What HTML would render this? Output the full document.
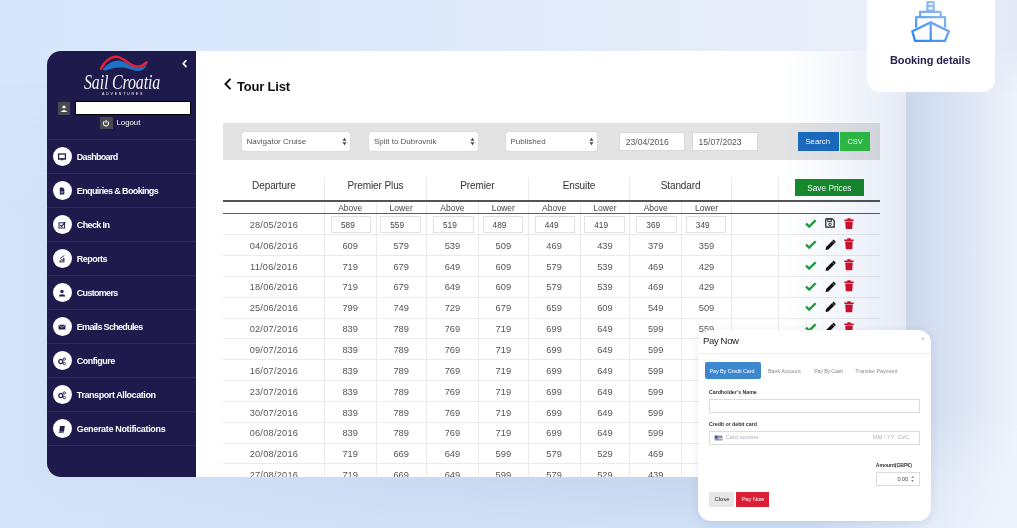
<!DOCTYPE html>
<html><head><meta charset="utf-8">
<style>
*{box-sizing:border-box;margin:0;padding:0}
html,body{width:1017px;height:528px;overflow:hidden}
body{position:relative;font-family:"Liberation Sans", sans-serif;background:#d6e5fa}
.a{position:absolute}
.t{position:absolute;white-space:nowrap;line-height:1}
</style></head><body>

<div class="a" style="left:0;top:0;width:1017px;height:528px;background:linear-gradient(90deg,#d3e4f9 0%,#cadaf2 40%,#c6d6ee 70%,#cad7ec 89%,#eef2fb 100%)"></div>
<div class="a" style="left:0;top:0;width:1017px;height:528px;background:linear-gradient(180deg,rgba(216,231,251,0.75) 0%,rgba(216,231,251,0) 40%);-webkit-mask-image:linear-gradient(90deg,#000 0%,#000 60%,transparent 86%)"></div>
<div class="a" style="left:0;top:0;width:1017px;height:110px;background:linear-gradient(90deg,#d7e7fb 0%,#d9e8fb 25%,#e0eafa 50%,#e6edf9 70%,#eaeff9 85%,#e3eaf6 100%);-webkit-mask-image:linear-gradient(180deg,#000 0px,#000 50px,transparent 92px)"></div>
<div class="a" style="left:0;top:440px;width:1017px;height:88px;background:linear-gradient(180deg,rgba(212,227,249,0) 0%,rgba(212,227,249,0) 40%,rgba(212,227,249,0.7) 100%)"></div>
<div class="a" style="left:0;top:0;width:1017px;height:528px;background:radial-gradient(ellipse 200px 120px at 1017px 528px,rgba(240,244,252,1) 0%,rgba(240,244,252,0) 100%)"></div>
<div class="a" style="left:47px;top:51px;width:859px;height:426px;border-radius:14px;overflow:hidden;background:#fff">
<div class="a" style="left:0;top:0;width:149px;height:426px;background:#1e1a4b"></div>
</div>
<svg class="a" style="left:181px;top:59px" width="7" height="9" viewBox="0 0 7 9"><path d="M5 1.6 L2.2 4.6 L5 7.6" fill="none" stroke="#fff" stroke-width="1.6" stroke-linecap="round" stroke-linejoin="round"/></svg>
<svg class="a" style="left:99px;top:55px" width="52" height="18" viewBox="0 0 52 18"><path d="M3.5 14.5 C8 9 13 5.5 19 5.5 C25 5.5 31 11 38 12.5 C42 13 45.5 11.5 48 9.5 C47 13 43 16 39 16 C34 16 30 13.5 25 12.8 C20 12 15 12.5 10 14.5 C7 15.8 5 16 3.5 14.5Z" fill="#1d70c2"/><path d="M2 13.6 C6 6 12 1.8 17 1.8 C23 1.8 28 8 34 10.5 C39 12.5 44 11 47.5 7.5" fill="none" stroke="#e5203b" stroke-width="2.5" stroke-linecap="round"/></svg>
<div class="t" style="left:83.5px;top:72.2px;font-family:'Liberation Serif',serif;font-style:italic;font-size:21px;color:#f2f2f6;letter-spacing:-0.2px;transform:scaleX(0.76);transform-origin:0 0">Sail Croatia</div>
<div class="t" style="left:102px;top:92.5px;font-size:3.6px;color:#fff;letter-spacing:1.75px">ADVENTURES</div>
<div class="a" style="left:58px;top:102px;width:12px;height:13px;background:#4a4950"></div>
<svg class="a" style="left:60px;top:104px" width="8" height="9" viewBox="0 0 8 9"><circle cx="4" cy="3" r="1.6" fill="#fff"/><path d="M1 8 C1 5.5 7 5.5 7 8Z" fill="#fff"/></svg>
<div class="a" style="left:74.5px;top:100.5px;width:116px;height:14px;background:#fff;border:1.5px solid #000"></div>
<div class="a" style="left:100px;top:117px;width:12.5px;height:12px;background:#4a4950"></div>
<svg class="a" style="left:102px;top:119px" width="8" height="8" viewBox="0 0 8 8"><path d="M2.4 2.4 A2.6 2.6 0 1 0 5.6 2.4" fill="none" stroke="#fff" stroke-width="1.1"/><path d="M4 1 V4" stroke="#fff" stroke-width="1.1"/></svg>
<div class="t" style="left:116.5px;top:118.8px;font-size:7.8px;color:#fff">Logout</div>
<div class="a" style="left:47px;top:139.2px;width:149px;height:1px;background:#2e2a58"></div>
<div class="a" style="left:52.9px;top:146.9px;width:19.2px;height:19.2px;border-radius:50%;background:#fff"></div>
<svg class="a" style="left:57.45px;top:151.50px" width="10" height="10" viewBox="0 0 10 10"><rect x="1.6" y="2" width="6.8" height="4.9" fill="none" stroke="#25214f" stroke-width="1.3"/><rect x="1" y="6.3" width="8" height="1" fill="#25214f"/><rect x="3.9" y="7" width="2.2" height="1.3" fill="#25214f"/></svg>
<div class="t" style="left:76.8px;top:152.5px;font-size:9px;font-weight:700;color:#fff;letter-spacing:-0.70px">Dashboard</div>
<div class="a" style="left:47px;top:173.2px;width:149px;height:1px;background:#2e2a58"></div>
<div class="a" style="left:52.9px;top:180.9px;width:19.2px;height:19.2px;border-radius:50%;background:#fff"></div>
<svg class="a" style="left:57.45px;top:185.50px" width="10" height="10" viewBox="0 0 10 10"><path d="M2.8 1.5 H5.8 L7.3 3 V8.6 H2.8Z" fill="#25214f"/><rect x="3.7" y="5.6" width="2.6" height="0.5" fill="#fff"/><rect x="3.7" y="6.6" width="2.6" height="0.5" fill="#fff"/></svg>
<div class="t" style="left:76.8px;top:186.5px;font-size:9px;font-weight:700;color:#fff;letter-spacing:-0.61px">Enquiries &amp; Bookings</div>
<div class="a" style="left:47px;top:207.2px;width:149px;height:1px;background:#2e2a58"></div>
<div class="a" style="left:52.9px;top:214.9px;width:19.2px;height:19.2px;border-radius:50%;background:#fff"></div>
<svg class="a" style="left:57.45px;top:219.50px" width="10" height="10" viewBox="0 0 10 10"><rect x="2" y="2.8" width="5.6" height="5.2" fill="none" stroke="#25214f" stroke-width="1"/><path d="M3.3 5 L4.7 6.4 L8.3 2.2" fill="none" stroke="#25214f" stroke-width="1.2"/></svg>
<div class="t" style="left:76.8px;top:220.5px;font-size:9px;font-weight:700;color:#fff;letter-spacing:-0.63px">Check In</div>
<div class="a" style="left:47px;top:241.2px;width:149px;height:1px;background:#2e2a58"></div>
<div class="a" style="left:52.9px;top:248.9px;width:19.2px;height:19.2px;border-radius:50%;background:#fff"></div>
<svg class="a" style="left:57.45px;top:253.50px" width="10" height="10" viewBox="0 0 10 10"><path d="M2.6 8.5 V6.2 H3.8 V8.5Z M4.4 8.5 V5 H5.6 V8.5Z M6.2 8.5 V4 H7.4 V8.5Z" fill="#25214f"/><path d="M3 4.6 L7.3 1.5" stroke="#25214f" stroke-width="0.9"/></svg>
<div class="t" style="left:76.8px;top:254.5px;font-size:9px;font-weight:700;color:#fff;letter-spacing:-0.54px">Reports</div>
<div class="a" style="left:47px;top:275.2px;width:149px;height:1px;background:#2e2a58"></div>
<div class="a" style="left:52.9px;top:282.9px;width:19.2px;height:19.2px;border-radius:50%;background:#fff"></div>
<svg class="a" style="left:57.45px;top:287.50px" width="10" height="10" viewBox="0 0 10 10"><circle cx="5" cy="3.4" r="1.7" fill="#25214f"/><path d="M1.8 8.6 C1.8 5.4 8.2 5.4 8.2 8.6Z" fill="#25214f"/></svg>
<div class="t" style="left:76.8px;top:288.5px;font-size:9px;font-weight:700;color:#fff;letter-spacing:-0.70px">Customers</div>
<div class="a" style="left:47px;top:309.2px;width:149px;height:1px;background:#2e2a58"></div>
<div class="a" style="left:52.9px;top:316.9px;width:19.2px;height:19.2px;border-radius:50%;background:#fff"></div>
<svg class="a" style="left:57.45px;top:321.50px" width="10" height="10" viewBox="0 0 10 10"><rect x="1.6" y="2.8" width="6.8" height="4.6" rx="0.4" fill="#25214f"/><path d="M1.8 3.1 L5 5.4 L8.2 3.1" fill="none" stroke="#fff" stroke-width="0.6"/></svg>
<div class="t" style="left:76.8px;top:322.5px;font-size:9px;font-weight:700;color:#fff;letter-spacing:-0.68px">Emails Schedules</div>
<div class="a" style="left:47px;top:343.2px;width:149px;height:1px;background:#2e2a58"></div>
<div class="a" style="left:52.9px;top:350.9px;width:19.2px;height:19.2px;border-radius:50%;background:#fff"></div>
<svg class="a" style="left:57.45px;top:355.50px" width="10" height="10" viewBox="0 0 10 10"><circle cx="3.8" cy="5.6" r="2.1" fill="none" stroke="#25214f" stroke-width="1.3"/><circle cx="7.3" cy="3" r="1.2" fill="none" stroke="#25214f" stroke-width="0.9"/><circle cx="7.3" cy="7.6" r="1.2" fill="none" stroke="#25214f" stroke-width="0.9"/></svg>
<div class="t" style="left:76.8px;top:356.5px;font-size:9px;font-weight:700;color:#fff;letter-spacing:-0.49px">Configure</div>
<div class="a" style="left:47px;top:377.2px;width:149px;height:1px;background:#2e2a58"></div>
<div class="a" style="left:52.9px;top:384.9px;width:19.2px;height:19.2px;border-radius:50%;background:#fff"></div>
<svg class="a" style="left:57.45px;top:389.50px" width="10" height="10" viewBox="0 0 10 10"><circle cx="3.8" cy="5.6" r="2.1" fill="none" stroke="#25214f" stroke-width="1.3"/><circle cx="7.3" cy="3" r="1.2" fill="none" stroke="#25214f" stroke-width="0.9"/><circle cx="7.3" cy="7.6" r="1.2" fill="none" stroke="#25214f" stroke-width="0.9"/></svg>
<div class="t" style="left:76.8px;top:390.5px;font-size:9px;font-weight:700;color:#fff;letter-spacing:-0.42px">Transport Allocation</div>
<div class="a" style="left:47px;top:411.2px;width:149px;height:1px;background:#2e2a58"></div>
<div class="a" style="left:52.9px;top:418.9px;width:19.2px;height:19.2px;border-radius:50%;background:#fff"></div>
<svg class="a" style="left:57.45px;top:423.50px" width="10" height="10" viewBox="0 0 10 10"><path d="M3 2 H7.8 L7 7.8 H2.2Z" fill="#25214f"/><path d="M2.2 7.8 L2 8.6 H6.8" fill="none" stroke="#25214f" stroke-width="0.7"/></svg>
<div class="t" style="left:76.8px;top:424.5px;font-size:9px;font-weight:700;color:#fff;letter-spacing:-0.34px">Generate Notifications</div>
<div class="a" style="left:47px;top:445px;width:149px;height:1px;background:#2e2a58"></div>
<div class="a" style="left:0;top:0;width:1017px;height:528px;clip-path:inset(51px 111px 51px 196px)">
<svg class="a" style="left:223px;top:78px" width="9" height="12" viewBox="0 0 9 12"><path d="M6.8 1.6 L2.4 6 L6.8 10.4" fill="none" stroke="#111" stroke-width="1.9" stroke-linecap="square"/></svg>
<div class="t" style="left:237px;top:79.5px;font-size:13px;font-weight:700;color:#111;letter-spacing:-0.2px">Tour List</div>
<div class="a" style="left:223px;top:123px;width:657px;height:37px;background:#e3e3e3"></div>
<div class="a" style="left:242.0px;top:132px;width:108.0px;height:19px;background:#fff;border-radius:3px;box-shadow:0 0 0 0.5px #d8d8d8"></div>
<div class="t" style="left:246.5px;top:137.6px;font-size:8px;color:#555">Navigator Cruise</div>
<svg class="a" style="left:342.2px;top:137px" width="5" height="9" viewBox="0 0 5 9"><path d="M0.5 3.8 L2.5 0.8 L4.5 3.8Z M0.5 5.2 L2.5 8.2 L4.5 5.2Z" fill="#444"/></svg>
<div class="a" style="left:369.4px;top:132px;width:108.6px;height:19px;background:#fff;border-radius:3px;box-shadow:0 0 0 0.5px #d8d8d8"></div>
<div class="t" style="left:373.9px;top:137.6px;font-size:8px;color:#555">Split to Dubrovnik</div>
<svg class="a" style="left:470.2px;top:137px" width="5" height="9" viewBox="0 0 5 9"><path d="M0.5 3.8 L2.5 0.8 L4.5 3.8Z M0.5 5.2 L2.5 8.2 L4.5 5.2Z" fill="#444"/></svg>
<div class="a" style="left:506.0px;top:132px;width:90.8px;height:19px;background:#fff;border-radius:3px;box-shadow:0 0 0 0.5px #d8d8d8"></div>
<div class="t" style="left:510.5px;top:137.6px;font-size:8px;color:#555">Published</div>
<svg class="a" style="left:589.0px;top:137px" width="5" height="9" viewBox="0 0 5 9"><path d="M0.5 3.8 L2.5 0.8 L4.5 3.8Z M0.5 5.2 L2.5 8.2 L4.5 5.2Z" fill="#444"/></svg>
<div class="a" style="left:618.8px;top:131.5px;width:66.2px;height:19.5px;background:#fff;border:1px solid #d9d9d9"></div>
<div class="t" style="left:625.8px;top:137.5px;font-size:8.6px;color:#555">23/04/2016</div>
<div class="a" style="left:691.5px;top:131.5px;width:66.9px;height:19.5px;background:#fff;border:1px solid #d9d9d9"></div>
<div class="t" style="left:698.5px;top:137.5px;font-size:8.6px;color:#555">15/07/2023</div>
<div class="a" style="left:797.7px;top:132px;width:41px;height:19px;background:#1b6bbd"></div>
<div class="t" style="left:805.4px;top:138.2px;font-size:7.8px;color:#fff">Search</div>
<div class="a" style="left:840px;top:132px;width:30.4px;height:19px;background:#2fbd44"></div>
<div class="t" style="left:847.5px;top:138.2px;font-size:7.4px;color:#fff">CSV</div>
<div class="a" style="left:324px;top:178px;width:1px;height:299px;background:#ebebeb"></div>
<div class="a" style="left:376px;top:202px;width:1px;height:275px;background:#ebebeb"></div>
<div class="a" style="left:426px;top:178px;width:1px;height:299px;background:#ebebeb"></div>
<div class="a" style="left:478px;top:202px;width:1px;height:275px;background:#ebebeb"></div>
<div class="a" style="left:528px;top:178px;width:1px;height:299px;background:#ebebeb"></div>
<div class="a" style="left:580px;top:202px;width:1px;height:275px;background:#ebebeb"></div>
<div class="a" style="left:629px;top:178px;width:1px;height:299px;background:#ebebeb"></div>
<div class="a" style="left:681px;top:202px;width:1px;height:275px;background:#ebebeb"></div>
<div class="a" style="left:731px;top:178px;width:1px;height:299px;background:#ebebeb"></div>
<div class="a" style="left:778px;top:178px;width:1px;height:299px;background:#ebebeb"></div>
<div class="t" style="left:273.9px;top:181.2px;width:0;font-size:10px;color:#333;letter-spacing:-0.1px"><span style="position:absolute;transform:translateX(-50%)">Departure</span></div>
<div class="t" style="left:375.5px;top:181.2px;width:0;font-size:10px;color:#333;letter-spacing:-0.1px"><span style="position:absolute;transform:translateX(-50%)">Premier Plus</span></div>
<div class="t" style="left:477.4px;top:181.2px;width:0;font-size:10px;color:#333;letter-spacing:-0.1px"><span style="position:absolute;transform:translateX(-50%)">Premier</span></div>
<div class="t" style="left:579.0px;top:181.2px;width:0;font-size:10px;color:#333;letter-spacing:-0.1px"><span style="position:absolute;transform:translateX(-50%)">Ensuite</span></div>
<div class="t" style="left:680.6px;top:181.2px;width:0;font-size:10px;color:#333;letter-spacing:-0.1px"><span style="position:absolute;transform:translateX(-50%)">Standard</span></div>
<div class="a" style="left:795.2px;top:178.8px;width:68.5px;height:17.2px;background:#168a2c"></div>
<div class="t" style="left:807.2px;top:183.5px;font-size:8.3px;color:#fff">Save Prices</div>
<div class="a" style="left:223.2px;top:200px;width:656.4px;height:2px;background:#555"></div>
<div class="a" style="left:223.2px;top:212.9px;width:656.4px;height:1.6px;background:#5c5c5c"></div>
<div class="t" style="left:350.2px;top:204.3px;width:0;font-size:8.5px;color:#444"><span style="position:absolute;transform:translateX(-50%)">Above</span></div>
<div class="t" style="left:401.2px;top:204.3px;width:0;font-size:8.5px;color:#444"><span style="position:absolute;transform:translateX(-50%)">Lower</span></div>
<div class="t" style="left:452.4px;top:204.3px;width:0;font-size:8.5px;color:#444"><span style="position:absolute;transform:translateX(-50%)">Above</span></div>
<div class="t" style="left:503.3px;top:204.3px;width:0;font-size:8.5px;color:#444"><span style="position:absolute;transform:translateX(-50%)">Lower</span></div>
<div class="t" style="left:554.1px;top:204.3px;width:0;font-size:8.5px;color:#444"><span style="position:absolute;transform:translateX(-50%)">Above</span></div>
<div class="t" style="left:604.9px;top:204.3px;width:0;font-size:8.5px;color:#444"><span style="position:absolute;transform:translateX(-50%)">Lower</span></div>
<div class="t" style="left:655.7px;top:204.3px;width:0;font-size:8.5px;color:#444"><span style="position:absolute;transform:translateX(-50%)">Above</span></div>
<div class="t" style="left:706.5px;top:204.3px;width:0;font-size:8.5px;color:#444"><span style="position:absolute;transform:translateX(-50%)">Lower</span></div>
<div class="a" style="left:223.2px;top:234.0px;width:656.4px;height:1px;background:#ebebeb"></div>
<div class="t" style="left:273.9px;top:220.8px;width:0;font-size:9.2px;color:#555;letter-spacing:0.25px"><span style="position:absolute;transform:translateX(-50%)">28/05/2016</span></div>
<svg class="a" style="left:805px;top:219.0px" width="11.5" height="9" viewBox="0 0 11.5 9"><path d="M1 4.6 L4.2 7.6 L10.6 1.2" fill="none" stroke="#1e9a3a" stroke-width="2.3"/></svg>
<svg class="a" style="left:843.8px;top:217.6px" width="10" height="11.5" viewBox="0 0 10 11.5"><path d="M0.3 1.6 H9.7 V3 H0.3Z M3.3 0.3 H6.7 V1.6 H3.3Z M1.2 3.6 H8.8 L8.2 11.2 H1.8Z" fill="#d3112c"/></svg>
<svg class="a" style="left:825px;top:218.3px" width="10" height="10" viewBox="0 0 10 10"><path d="M1 0.8 H7.4 L9.2 2.6 V9.2 H0.8 V0.8Z" fill="none" stroke="#222" stroke-width="1.2" stroke-linejoin="round"/><rect x="2.8" y="1" width="3.6" height="2.4" fill="none" stroke="#222" stroke-width="0.9"/><circle cx="5" cy="6.3" r="1.3" fill="none" stroke="#222" stroke-width="0.9"/></svg>
<div class="a" style="left:331.0px;top:216.3px;width:40.3px;height:16.4px;border:1px solid #e2e2e2;background:#fff"></div>
<div class="t" style="left:341.0px;top:221.4px;font-size:8.3px;color:#444">589</div>
<div class="a" style="left:380.2px;top:216.3px;width:41.2px;height:16.4px;border:1px solid #e2e2e2;background:#fff"></div>
<div class="t" style="left:390.2px;top:221.4px;font-size:8.3px;color:#444">559</div>
<div class="a" style="left:433.0px;top:216.3px;width:40.7px;height:16.4px;border:1px solid #e2e2e2;background:#fff"></div>
<div class="t" style="left:443.0px;top:221.4px;font-size:8.3px;color:#444">519</div>
<div class="a" style="left:482.6px;top:216.3px;width:40.5px;height:16.4px;border:1px solid #e2e2e2;background:#fff"></div>
<div class="t" style="left:492.6px;top:221.4px;font-size:8.3px;color:#444">489</div>
<div class="a" style="left:534.7px;top:216.3px;width:40.6px;height:16.4px;border:1px solid #e2e2e2;background:#fff"></div>
<div class="t" style="left:544.7px;top:221.4px;font-size:8.3px;color:#444">449</div>
<div class="a" style="left:584.2px;top:216.3px;width:40.5px;height:16.4px;border:1px solid #e2e2e2;background:#fff"></div>
<div class="t" style="left:594.2px;top:221.4px;font-size:8.3px;color:#444">419</div>
<div class="a" style="left:636.3px;top:216.3px;width:40.6px;height:16.4px;border:1px solid #e2e2e2;background:#fff"></div>
<div class="t" style="left:646.3px;top:221.4px;font-size:8.3px;color:#444">369</div>
<div class="a" style="left:685.8px;top:216.3px;width:40.6px;height:16.4px;border:1px solid #e2e2e2;background:#fff"></div>
<div class="t" style="left:695.8px;top:221.4px;font-size:8.3px;color:#444">349</div>
<div class="a" style="left:223.2px;top:254.9px;width:656.4px;height:1px;background:#ebebeb"></div>
<div class="t" style="left:273.9px;top:241.7px;width:0;font-size:9.2px;color:#555;letter-spacing:0.25px"><span style="position:absolute;transform:translateX(-50%)">04/06/2016</span></div>
<svg class="a" style="left:805px;top:239.8px" width="11.5" height="9" viewBox="0 0 11.5 9"><path d="M1 4.6 L4.2 7.6 L10.6 1.2" fill="none" stroke="#1e9a3a" stroke-width="2.3"/></svg>
<svg class="a" style="left:843.8px;top:238.4px" width="10" height="11.5" viewBox="0 0 10 11.5"><path d="M0.3 1.6 H9.7 V3 H0.3Z M3.3 0.3 H6.7 V1.6 H3.3Z M1.2 3.6 H8.8 L8.2 11.2 H1.8Z" fill="#d3112c"/></svg>
<svg class="a" style="left:824.5px;top:238.8px" width="11.5" height="11.5" viewBox="0 0 11.5 11.5"><path d="M8.6 0.6 L10.9 2.9 L3.4 10.4 L0.6 10.9 L1.1 8.1Z" fill="#111"/><path d="M7.2 2 L9.5 4.3" stroke="#fff" stroke-width="0.5"/></svg>
<div class="t" style="left:350.2px;top:241.7px;width:0;font-size:9.3px;color:#555"><span style="position:absolute;transform:translateX(-50%)">609</span></div>
<div class="t" style="left:401.2px;top:241.7px;width:0;font-size:9.3px;color:#555"><span style="position:absolute;transform:translateX(-50%)">579</span></div>
<div class="t" style="left:452.4px;top:241.7px;width:0;font-size:9.3px;color:#555"><span style="position:absolute;transform:translateX(-50%)">539</span></div>
<div class="t" style="left:503.3px;top:241.7px;width:0;font-size:9.3px;color:#555"><span style="position:absolute;transform:translateX(-50%)">509</span></div>
<div class="t" style="left:554.1px;top:241.7px;width:0;font-size:9.3px;color:#555"><span style="position:absolute;transform:translateX(-50%)">469</span></div>
<div class="t" style="left:604.9px;top:241.7px;width:0;font-size:9.3px;color:#555"><span style="position:absolute;transform:translateX(-50%)">439</span></div>
<div class="t" style="left:655.7px;top:241.7px;width:0;font-size:9.3px;color:#555"><span style="position:absolute;transform:translateX(-50%)">379</span></div>
<div class="t" style="left:706.5px;top:241.7px;width:0;font-size:9.3px;color:#555"><span style="position:absolute;transform:translateX(-50%)">359</span></div>
<div class="a" style="left:223.2px;top:275.8px;width:656.4px;height:1px;background:#ebebeb"></div>
<div class="t" style="left:273.9px;top:262.5px;width:0;font-size:9.2px;color:#555;letter-spacing:0.25px"><span style="position:absolute;transform:translateX(-50%)">11/06/2016</span></div>
<svg class="a" style="left:805px;top:260.7px" width="11.5" height="9" viewBox="0 0 11.5 9"><path d="M1 4.6 L4.2 7.6 L10.6 1.2" fill="none" stroke="#1e9a3a" stroke-width="2.3"/></svg>
<svg class="a" style="left:843.8px;top:259.3px" width="10" height="11.5" viewBox="0 0 10 11.5"><path d="M0.3 1.6 H9.7 V3 H0.3Z M3.3 0.3 H6.7 V1.6 H3.3Z M1.2 3.6 H8.8 L8.2 11.2 H1.8Z" fill="#d3112c"/></svg>
<svg class="a" style="left:824.5px;top:259.7px" width="11.5" height="11.5" viewBox="0 0 11.5 11.5"><path d="M8.6 0.6 L10.9 2.9 L3.4 10.4 L0.6 10.9 L1.1 8.1Z" fill="#111"/><path d="M7.2 2 L9.5 4.3" stroke="#fff" stroke-width="0.5"/></svg>
<div class="t" style="left:350.2px;top:262.5px;width:0;font-size:9.3px;color:#555"><span style="position:absolute;transform:translateX(-50%)">719</span></div>
<div class="t" style="left:401.2px;top:262.5px;width:0;font-size:9.3px;color:#555"><span style="position:absolute;transform:translateX(-50%)">679</span></div>
<div class="t" style="left:452.4px;top:262.5px;width:0;font-size:9.3px;color:#555"><span style="position:absolute;transform:translateX(-50%)">649</span></div>
<div class="t" style="left:503.3px;top:262.5px;width:0;font-size:9.3px;color:#555"><span style="position:absolute;transform:translateX(-50%)">609</span></div>
<div class="t" style="left:554.1px;top:262.5px;width:0;font-size:9.3px;color:#555"><span style="position:absolute;transform:translateX(-50%)">579</span></div>
<div class="t" style="left:604.9px;top:262.5px;width:0;font-size:9.3px;color:#555"><span style="position:absolute;transform:translateX(-50%)">539</span></div>
<div class="t" style="left:655.7px;top:262.5px;width:0;font-size:9.3px;color:#555"><span style="position:absolute;transform:translateX(-50%)">469</span></div>
<div class="t" style="left:706.5px;top:262.5px;width:0;font-size:9.3px;color:#555"><span style="position:absolute;transform:translateX(-50%)">429</span></div>
<div class="a" style="left:223.2px;top:296.6px;width:656.4px;height:1px;background:#ebebeb"></div>
<div class="t" style="left:273.9px;top:283.4px;width:0;font-size:9.2px;color:#555;letter-spacing:0.25px"><span style="position:absolute;transform:translateX(-50%)">18/06/2016</span></div>
<svg class="a" style="left:805px;top:281.6px" width="11.5" height="9" viewBox="0 0 11.5 9"><path d="M1 4.6 L4.2 7.6 L10.6 1.2" fill="none" stroke="#1e9a3a" stroke-width="2.3"/></svg>
<svg class="a" style="left:843.8px;top:280.1px" width="10" height="11.5" viewBox="0 0 10 11.5"><path d="M0.3 1.6 H9.7 V3 H0.3Z M3.3 0.3 H6.7 V1.6 H3.3Z M1.2 3.6 H8.8 L8.2 11.2 H1.8Z" fill="#d3112c"/></svg>
<svg class="a" style="left:824.5px;top:280.6px" width="11.5" height="11.5" viewBox="0 0 11.5 11.5"><path d="M8.6 0.6 L10.9 2.9 L3.4 10.4 L0.6 10.9 L1.1 8.1Z" fill="#111"/><path d="M7.2 2 L9.5 4.3" stroke="#fff" stroke-width="0.5"/></svg>
<div class="t" style="left:350.2px;top:283.4px;width:0;font-size:9.3px;color:#555"><span style="position:absolute;transform:translateX(-50%)">719</span></div>
<div class="t" style="left:401.2px;top:283.4px;width:0;font-size:9.3px;color:#555"><span style="position:absolute;transform:translateX(-50%)">679</span></div>
<div class="t" style="left:452.4px;top:283.4px;width:0;font-size:9.3px;color:#555"><span style="position:absolute;transform:translateX(-50%)">649</span></div>
<div class="t" style="left:503.3px;top:283.4px;width:0;font-size:9.3px;color:#555"><span style="position:absolute;transform:translateX(-50%)">609</span></div>
<div class="t" style="left:554.1px;top:283.4px;width:0;font-size:9.3px;color:#555"><span style="position:absolute;transform:translateX(-50%)">579</span></div>
<div class="t" style="left:604.9px;top:283.4px;width:0;font-size:9.3px;color:#555"><span style="position:absolute;transform:translateX(-50%)">539</span></div>
<div class="t" style="left:655.7px;top:283.4px;width:0;font-size:9.3px;color:#555"><span style="position:absolute;transform:translateX(-50%)">469</span></div>
<div class="t" style="left:706.5px;top:283.4px;width:0;font-size:9.3px;color:#555"><span style="position:absolute;transform:translateX(-50%)">429</span></div>
<div class="a" style="left:223.2px;top:317.5px;width:656.4px;height:1px;background:#ebebeb"></div>
<div class="t" style="left:273.9px;top:304.2px;width:0;font-size:9.2px;color:#555;letter-spacing:0.25px"><span style="position:absolute;transform:translateX(-50%)">25/06/2016</span></div>
<svg class="a" style="left:805px;top:302.4px" width="11.5" height="9" viewBox="0 0 11.5 9"><path d="M1 4.6 L4.2 7.6 L10.6 1.2" fill="none" stroke="#1e9a3a" stroke-width="2.3"/></svg>
<svg class="a" style="left:843.8px;top:301.0px" width="10" height="11.5" viewBox="0 0 10 11.5"><path d="M0.3 1.6 H9.7 V3 H0.3Z M3.3 0.3 H6.7 V1.6 H3.3Z M1.2 3.6 H8.8 L8.2 11.2 H1.8Z" fill="#d3112c"/></svg>
<svg class="a" style="left:824.5px;top:301.4px" width="11.5" height="11.5" viewBox="0 0 11.5 11.5"><path d="M8.6 0.6 L10.9 2.9 L3.4 10.4 L0.6 10.9 L1.1 8.1Z" fill="#111"/><path d="M7.2 2 L9.5 4.3" stroke="#fff" stroke-width="0.5"/></svg>
<div class="t" style="left:350.2px;top:304.2px;width:0;font-size:9.3px;color:#555"><span style="position:absolute;transform:translateX(-50%)">799</span></div>
<div class="t" style="left:401.2px;top:304.2px;width:0;font-size:9.3px;color:#555"><span style="position:absolute;transform:translateX(-50%)">749</span></div>
<div class="t" style="left:452.4px;top:304.2px;width:0;font-size:9.3px;color:#555"><span style="position:absolute;transform:translateX(-50%)">729</span></div>
<div class="t" style="left:503.3px;top:304.2px;width:0;font-size:9.3px;color:#555"><span style="position:absolute;transform:translateX(-50%)">679</span></div>
<div class="t" style="left:554.1px;top:304.2px;width:0;font-size:9.3px;color:#555"><span style="position:absolute;transform:translateX(-50%)">659</span></div>
<div class="t" style="left:604.9px;top:304.2px;width:0;font-size:9.3px;color:#555"><span style="position:absolute;transform:translateX(-50%)">609</span></div>
<div class="t" style="left:655.7px;top:304.2px;width:0;font-size:9.3px;color:#555"><span style="position:absolute;transform:translateX(-50%)">549</span></div>
<div class="t" style="left:706.5px;top:304.2px;width:0;font-size:9.3px;color:#555"><span style="position:absolute;transform:translateX(-50%)">509</span></div>
<div class="a" style="left:223.2px;top:338.3px;width:656.4px;height:1px;background:#ebebeb"></div>
<div class="t" style="left:273.9px;top:325.1px;width:0;font-size:9.2px;color:#555;letter-spacing:0.25px"><span style="position:absolute;transform:translateX(-50%)">02/07/2016</span></div>
<svg class="a" style="left:805px;top:323.2px" width="11.5" height="9" viewBox="0 0 11.5 9"><path d="M1 4.6 L4.2 7.6 L10.6 1.2" fill="none" stroke="#1e9a3a" stroke-width="2.3"/></svg>
<svg class="a" style="left:843.8px;top:321.8px" width="10" height="11.5" viewBox="0 0 10 11.5"><path d="M0.3 1.6 H9.7 V3 H0.3Z M3.3 0.3 H6.7 V1.6 H3.3Z M1.2 3.6 H8.8 L8.2 11.2 H1.8Z" fill="#d3112c"/></svg>
<svg class="a" style="left:824.5px;top:322.2px" width="11.5" height="11.5" viewBox="0 0 11.5 11.5"><path d="M8.6 0.6 L10.9 2.9 L3.4 10.4 L0.6 10.9 L1.1 8.1Z" fill="#111"/><path d="M7.2 2 L9.5 4.3" stroke="#fff" stroke-width="0.5"/></svg>
<div class="t" style="left:350.2px;top:325.1px;width:0;font-size:9.3px;color:#555"><span style="position:absolute;transform:translateX(-50%)">839</span></div>
<div class="t" style="left:401.2px;top:325.1px;width:0;font-size:9.3px;color:#555"><span style="position:absolute;transform:translateX(-50%)">789</span></div>
<div class="t" style="left:452.4px;top:325.1px;width:0;font-size:9.3px;color:#555"><span style="position:absolute;transform:translateX(-50%)">769</span></div>
<div class="t" style="left:503.3px;top:325.1px;width:0;font-size:9.3px;color:#555"><span style="position:absolute;transform:translateX(-50%)">719</span></div>
<div class="t" style="left:554.1px;top:325.1px;width:0;font-size:9.3px;color:#555"><span style="position:absolute;transform:translateX(-50%)">699</span></div>
<div class="t" style="left:604.9px;top:325.1px;width:0;font-size:9.3px;color:#555"><span style="position:absolute;transform:translateX(-50%)">649</span></div>
<div class="t" style="left:655.7px;top:325.1px;width:0;font-size:9.3px;color:#555"><span style="position:absolute;transform:translateX(-50%)">599</span></div>
<div class="t" style="left:706.5px;top:325.1px;width:0;font-size:9.3px;color:#555"><span style="position:absolute;transform:translateX(-50%)">559</span></div>
<div class="a" style="left:223.2px;top:359.2px;width:656.4px;height:1px;background:#ebebeb"></div>
<div class="t" style="left:273.9px;top:345.9px;width:0;font-size:9.2px;color:#555;letter-spacing:0.25px"><span style="position:absolute;transform:translateX(-50%)">09/07/2016</span></div>
<svg class="a" style="left:805px;top:344.1px" width="11.5" height="9" viewBox="0 0 11.5 9"><path d="M1 4.6 L4.2 7.6 L10.6 1.2" fill="none" stroke="#1e9a3a" stroke-width="2.3"/></svg>
<svg class="a" style="left:843.8px;top:342.7px" width="10" height="11.5" viewBox="0 0 10 11.5"><path d="M0.3 1.6 H9.7 V3 H0.3Z M3.3 0.3 H6.7 V1.6 H3.3Z M1.2 3.6 H8.8 L8.2 11.2 H1.8Z" fill="#d3112c"/></svg>
<svg class="a" style="left:824.5px;top:343.1px" width="11.5" height="11.5" viewBox="0 0 11.5 11.5"><path d="M8.6 0.6 L10.9 2.9 L3.4 10.4 L0.6 10.9 L1.1 8.1Z" fill="#111"/><path d="M7.2 2 L9.5 4.3" stroke="#fff" stroke-width="0.5"/></svg>
<div class="t" style="left:350.2px;top:345.9px;width:0;font-size:9.3px;color:#555"><span style="position:absolute;transform:translateX(-50%)">839</span></div>
<div class="t" style="left:401.2px;top:345.9px;width:0;font-size:9.3px;color:#555"><span style="position:absolute;transform:translateX(-50%)">789</span></div>
<div class="t" style="left:452.4px;top:345.9px;width:0;font-size:9.3px;color:#555"><span style="position:absolute;transform:translateX(-50%)">769</span></div>
<div class="t" style="left:503.3px;top:345.9px;width:0;font-size:9.3px;color:#555"><span style="position:absolute;transform:translateX(-50%)">719</span></div>
<div class="t" style="left:554.1px;top:345.9px;width:0;font-size:9.3px;color:#555"><span style="position:absolute;transform:translateX(-50%)">699</span></div>
<div class="t" style="left:604.9px;top:345.9px;width:0;font-size:9.3px;color:#555"><span style="position:absolute;transform:translateX(-50%)">649</span></div>
<div class="t" style="left:655.7px;top:345.9px;width:0;font-size:9.3px;color:#555"><span style="position:absolute;transform:translateX(-50%)">599</span></div>
<div class="t" style="left:706.5px;top:345.9px;width:0;font-size:9.3px;color:#555"><span style="position:absolute;transform:translateX(-50%)">559</span></div>
<div class="a" style="left:223.2px;top:380.0px;width:656.4px;height:1px;background:#ebebeb"></div>
<div class="t" style="left:273.9px;top:366.8px;width:0;font-size:9.2px;color:#555;letter-spacing:0.25px"><span style="position:absolute;transform:translateX(-50%)">16/07/2016</span></div>
<svg class="a" style="left:805px;top:364.9px" width="11.5" height="9" viewBox="0 0 11.5 9"><path d="M1 4.6 L4.2 7.6 L10.6 1.2" fill="none" stroke="#1e9a3a" stroke-width="2.3"/></svg>
<svg class="a" style="left:843.8px;top:363.5px" width="10" height="11.5" viewBox="0 0 10 11.5"><path d="M0.3 1.6 H9.7 V3 H0.3Z M3.3 0.3 H6.7 V1.6 H3.3Z M1.2 3.6 H8.8 L8.2 11.2 H1.8Z" fill="#d3112c"/></svg>
<svg class="a" style="left:824.5px;top:363.9px" width="11.5" height="11.5" viewBox="0 0 11.5 11.5"><path d="M8.6 0.6 L10.9 2.9 L3.4 10.4 L0.6 10.9 L1.1 8.1Z" fill="#111"/><path d="M7.2 2 L9.5 4.3" stroke="#fff" stroke-width="0.5"/></svg>
<div class="t" style="left:350.2px;top:366.8px;width:0;font-size:9.3px;color:#555"><span style="position:absolute;transform:translateX(-50%)">839</span></div>
<div class="t" style="left:401.2px;top:366.8px;width:0;font-size:9.3px;color:#555"><span style="position:absolute;transform:translateX(-50%)">789</span></div>
<div class="t" style="left:452.4px;top:366.8px;width:0;font-size:9.3px;color:#555"><span style="position:absolute;transform:translateX(-50%)">769</span></div>
<div class="t" style="left:503.3px;top:366.8px;width:0;font-size:9.3px;color:#555"><span style="position:absolute;transform:translateX(-50%)">719</span></div>
<div class="t" style="left:554.1px;top:366.8px;width:0;font-size:9.3px;color:#555"><span style="position:absolute;transform:translateX(-50%)">699</span></div>
<div class="t" style="left:604.9px;top:366.8px;width:0;font-size:9.3px;color:#555"><span style="position:absolute;transform:translateX(-50%)">649</span></div>
<div class="t" style="left:655.7px;top:366.8px;width:0;font-size:9.3px;color:#555"><span style="position:absolute;transform:translateX(-50%)">599</span></div>
<div class="t" style="left:706.5px;top:366.8px;width:0;font-size:9.3px;color:#555"><span style="position:absolute;transform:translateX(-50%)">559</span></div>
<div class="a" style="left:223.2px;top:400.9px;width:656.4px;height:1px;background:#ebebeb"></div>
<div class="t" style="left:273.9px;top:387.6px;width:0;font-size:9.2px;color:#555;letter-spacing:0.25px"><span style="position:absolute;transform:translateX(-50%)">23/07/2016</span></div>
<svg class="a" style="left:805px;top:385.8px" width="11.5" height="9" viewBox="0 0 11.5 9"><path d="M1 4.6 L4.2 7.6 L10.6 1.2" fill="none" stroke="#1e9a3a" stroke-width="2.3"/></svg>
<svg class="a" style="left:843.8px;top:384.4px" width="10" height="11.5" viewBox="0 0 10 11.5"><path d="M0.3 1.6 H9.7 V3 H0.3Z M3.3 0.3 H6.7 V1.6 H3.3Z M1.2 3.6 H8.8 L8.2 11.2 H1.8Z" fill="#d3112c"/></svg>
<svg class="a" style="left:824.5px;top:384.8px" width="11.5" height="11.5" viewBox="0 0 11.5 11.5"><path d="M8.6 0.6 L10.9 2.9 L3.4 10.4 L0.6 10.9 L1.1 8.1Z" fill="#111"/><path d="M7.2 2 L9.5 4.3" stroke="#fff" stroke-width="0.5"/></svg>
<div class="t" style="left:350.2px;top:387.6px;width:0;font-size:9.3px;color:#555"><span style="position:absolute;transform:translateX(-50%)">839</span></div>
<div class="t" style="left:401.2px;top:387.6px;width:0;font-size:9.3px;color:#555"><span style="position:absolute;transform:translateX(-50%)">789</span></div>
<div class="t" style="left:452.4px;top:387.6px;width:0;font-size:9.3px;color:#555"><span style="position:absolute;transform:translateX(-50%)">769</span></div>
<div class="t" style="left:503.3px;top:387.6px;width:0;font-size:9.3px;color:#555"><span style="position:absolute;transform:translateX(-50%)">719</span></div>
<div class="t" style="left:554.1px;top:387.6px;width:0;font-size:9.3px;color:#555"><span style="position:absolute;transform:translateX(-50%)">699</span></div>
<div class="t" style="left:604.9px;top:387.6px;width:0;font-size:9.3px;color:#555"><span style="position:absolute;transform:translateX(-50%)">649</span></div>
<div class="t" style="left:655.7px;top:387.6px;width:0;font-size:9.3px;color:#555"><span style="position:absolute;transform:translateX(-50%)">599</span></div>
<div class="t" style="left:706.5px;top:387.6px;width:0;font-size:9.3px;color:#555"><span style="position:absolute;transform:translateX(-50%)">559</span></div>
<div class="a" style="left:223.2px;top:421.7px;width:656.4px;height:1px;background:#ebebeb"></div>
<div class="t" style="left:273.9px;top:408.5px;width:0;font-size:9.2px;color:#555;letter-spacing:0.25px"><span style="position:absolute;transform:translateX(-50%)">30/07/2016</span></div>
<svg class="a" style="left:805px;top:406.7px" width="11.5" height="9" viewBox="0 0 11.5 9"><path d="M1 4.6 L4.2 7.6 L10.6 1.2" fill="none" stroke="#1e9a3a" stroke-width="2.3"/></svg>
<svg class="a" style="left:843.8px;top:405.2px" width="10" height="11.5" viewBox="0 0 10 11.5"><path d="M0.3 1.6 H9.7 V3 H0.3Z M3.3 0.3 H6.7 V1.6 H3.3Z M1.2 3.6 H8.8 L8.2 11.2 H1.8Z" fill="#d3112c"/></svg>
<svg class="a" style="left:824.5px;top:405.7px" width="11.5" height="11.5" viewBox="0 0 11.5 11.5"><path d="M8.6 0.6 L10.9 2.9 L3.4 10.4 L0.6 10.9 L1.1 8.1Z" fill="#111"/><path d="M7.2 2 L9.5 4.3" stroke="#fff" stroke-width="0.5"/></svg>
<div class="t" style="left:350.2px;top:408.5px;width:0;font-size:9.3px;color:#555"><span style="position:absolute;transform:translateX(-50%)">839</span></div>
<div class="t" style="left:401.2px;top:408.5px;width:0;font-size:9.3px;color:#555"><span style="position:absolute;transform:translateX(-50%)">789</span></div>
<div class="t" style="left:452.4px;top:408.5px;width:0;font-size:9.3px;color:#555"><span style="position:absolute;transform:translateX(-50%)">769</span></div>
<div class="t" style="left:503.3px;top:408.5px;width:0;font-size:9.3px;color:#555"><span style="position:absolute;transform:translateX(-50%)">719</span></div>
<div class="t" style="left:554.1px;top:408.5px;width:0;font-size:9.3px;color:#555"><span style="position:absolute;transform:translateX(-50%)">699</span></div>
<div class="t" style="left:604.9px;top:408.5px;width:0;font-size:9.3px;color:#555"><span style="position:absolute;transform:translateX(-50%)">649</span></div>
<div class="t" style="left:655.7px;top:408.5px;width:0;font-size:9.3px;color:#555"><span style="position:absolute;transform:translateX(-50%)">599</span></div>
<div class="t" style="left:706.5px;top:408.5px;width:0;font-size:9.3px;color:#555"><span style="position:absolute;transform:translateX(-50%)">559</span></div>
<div class="a" style="left:223.2px;top:442.6px;width:656.4px;height:1px;background:#ebebeb"></div>
<div class="t" style="left:273.9px;top:429.3px;width:0;font-size:9.2px;color:#555;letter-spacing:0.25px"><span style="position:absolute;transform:translateX(-50%)">06/08/2016</span></div>
<svg class="a" style="left:805px;top:427.5px" width="11.5" height="9" viewBox="0 0 11.5 9"><path d="M1 4.6 L4.2 7.6 L10.6 1.2" fill="none" stroke="#1e9a3a" stroke-width="2.3"/></svg>
<svg class="a" style="left:843.8px;top:426.1px" width="10" height="11.5" viewBox="0 0 10 11.5"><path d="M0.3 1.6 H9.7 V3 H0.3Z M3.3 0.3 H6.7 V1.6 H3.3Z M1.2 3.6 H8.8 L8.2 11.2 H1.8Z" fill="#d3112c"/></svg>
<svg class="a" style="left:824.5px;top:426.5px" width="11.5" height="11.5" viewBox="0 0 11.5 11.5"><path d="M8.6 0.6 L10.9 2.9 L3.4 10.4 L0.6 10.9 L1.1 8.1Z" fill="#111"/><path d="M7.2 2 L9.5 4.3" stroke="#fff" stroke-width="0.5"/></svg>
<div class="t" style="left:350.2px;top:429.3px;width:0;font-size:9.3px;color:#555"><span style="position:absolute;transform:translateX(-50%)">839</span></div>
<div class="t" style="left:401.2px;top:429.3px;width:0;font-size:9.3px;color:#555"><span style="position:absolute;transform:translateX(-50%)">789</span></div>
<div class="t" style="left:452.4px;top:429.3px;width:0;font-size:9.3px;color:#555"><span style="position:absolute;transform:translateX(-50%)">769</span></div>
<div class="t" style="left:503.3px;top:429.3px;width:0;font-size:9.3px;color:#555"><span style="position:absolute;transform:translateX(-50%)">719</span></div>
<div class="t" style="left:554.1px;top:429.3px;width:0;font-size:9.3px;color:#555"><span style="position:absolute;transform:translateX(-50%)">699</span></div>
<div class="t" style="left:604.9px;top:429.3px;width:0;font-size:9.3px;color:#555"><span style="position:absolute;transform:translateX(-50%)">649</span></div>
<div class="t" style="left:655.7px;top:429.3px;width:0;font-size:9.3px;color:#555"><span style="position:absolute;transform:translateX(-50%)">599</span></div>
<div class="t" style="left:706.5px;top:429.3px;width:0;font-size:9.3px;color:#555"><span style="position:absolute;transform:translateX(-50%)">559</span></div>
<div class="a" style="left:223.2px;top:463.4px;width:656.4px;height:1px;background:#ebebeb"></div>
<div class="t" style="left:273.9px;top:450.2px;width:0;font-size:9.2px;color:#555;letter-spacing:0.25px"><span style="position:absolute;transform:translateX(-50%)">20/08/2016</span></div>
<svg class="a" style="left:805px;top:448.4px" width="11.5" height="9" viewBox="0 0 11.5 9"><path d="M1 4.6 L4.2 7.6 L10.6 1.2" fill="none" stroke="#1e9a3a" stroke-width="2.3"/></svg>
<svg class="a" style="left:843.8px;top:446.9px" width="10" height="11.5" viewBox="0 0 10 11.5"><path d="M0.3 1.6 H9.7 V3 H0.3Z M3.3 0.3 H6.7 V1.6 H3.3Z M1.2 3.6 H8.8 L8.2 11.2 H1.8Z" fill="#d3112c"/></svg>
<svg class="a" style="left:824.5px;top:447.4px" width="11.5" height="11.5" viewBox="0 0 11.5 11.5"><path d="M8.6 0.6 L10.9 2.9 L3.4 10.4 L0.6 10.9 L1.1 8.1Z" fill="#111"/><path d="M7.2 2 L9.5 4.3" stroke="#fff" stroke-width="0.5"/></svg>
<div class="t" style="left:350.2px;top:450.2px;width:0;font-size:9.3px;color:#555"><span style="position:absolute;transform:translateX(-50%)">719</span></div>
<div class="t" style="left:401.2px;top:450.2px;width:0;font-size:9.3px;color:#555"><span style="position:absolute;transform:translateX(-50%)">669</span></div>
<div class="t" style="left:452.4px;top:450.2px;width:0;font-size:9.3px;color:#555"><span style="position:absolute;transform:translateX(-50%)">649</span></div>
<div class="t" style="left:503.3px;top:450.2px;width:0;font-size:9.3px;color:#555"><span style="position:absolute;transform:translateX(-50%)">599</span></div>
<div class="t" style="left:554.1px;top:450.2px;width:0;font-size:9.3px;color:#555"><span style="position:absolute;transform:translateX(-50%)">579</span></div>
<div class="t" style="left:604.9px;top:450.2px;width:0;font-size:9.3px;color:#555"><span style="position:absolute;transform:translateX(-50%)">529</span></div>
<div class="t" style="left:655.7px;top:450.2px;width:0;font-size:9.3px;color:#555"><span style="position:absolute;transform:translateX(-50%)">469</span></div>
<div class="t" style="left:706.5px;top:450.2px;width:0;font-size:9.3px;color:#555"><span style="position:absolute;transform:translateX(-50%)">429</span></div>
<div class="a" style="left:223.2px;top:484.2px;width:656.4px;height:1px;background:#ebebeb"></div>
<div class="t" style="left:273.9px;top:471.0px;width:0;font-size:9.2px;color:#555;letter-spacing:0.25px"><span style="position:absolute;transform:translateX(-50%)">27/08/2016</span></div>
<svg class="a" style="left:805px;top:469.2px" width="11.5" height="9" viewBox="0 0 11.5 9"><path d="M1 4.6 L4.2 7.6 L10.6 1.2" fill="none" stroke="#1e9a3a" stroke-width="2.3"/></svg>
<svg class="a" style="left:843.8px;top:467.8px" width="10" height="11.5" viewBox="0 0 10 11.5"><path d="M0.3 1.6 H9.7 V3 H0.3Z M3.3 0.3 H6.7 V1.6 H3.3Z M1.2 3.6 H8.8 L8.2 11.2 H1.8Z" fill="#d3112c"/></svg>
<svg class="a" style="left:824.5px;top:468.2px" width="11.5" height="11.5" viewBox="0 0 11.5 11.5"><path d="M8.6 0.6 L10.9 2.9 L3.4 10.4 L0.6 10.9 L1.1 8.1Z" fill="#111"/><path d="M7.2 2 L9.5 4.3" stroke="#fff" stroke-width="0.5"/></svg>
<div class="t" style="left:350.2px;top:471.0px;width:0;font-size:9.3px;color:#555"><span style="position:absolute;transform:translateX(-50%)">719</span></div>
<div class="t" style="left:401.2px;top:471.0px;width:0;font-size:9.3px;color:#555"><span style="position:absolute;transform:translateX(-50%)">669</span></div>
<div class="t" style="left:452.4px;top:471.0px;width:0;font-size:9.3px;color:#555"><span style="position:absolute;transform:translateX(-50%)">649</span></div>
<div class="t" style="left:503.3px;top:471.0px;width:0;font-size:9.3px;color:#555"><span style="position:absolute;transform:translateX(-50%)">599</span></div>
<div class="t" style="left:554.1px;top:471.0px;width:0;font-size:9.3px;color:#555"><span style="position:absolute;transform:translateX(-50%)">579</span></div>
<div class="t" style="left:604.9px;top:471.0px;width:0;font-size:9.3px;color:#555"><span style="position:absolute;transform:translateX(-50%)">529</span></div>
<div class="t" style="left:655.7px;top:471.0px;width:0;font-size:9.3px;color:#555"><span style="position:absolute;transform:translateX(-50%)">439</span></div>
<div class="t" style="left:706.5px;top:471.0px;width:0;font-size:9.3px;color:#555"><span style="position:absolute;transform:translateX(-50%)">399</span></div>
</div>
<div class="a" style="left:700px;top:51px;width:206px;height:426px;mix-blend-mode:multiply;background:linear-gradient(90deg,#fff 0%,#fff 40%,#f3f6fb 70%,#e5eaf5 100%)"></div>
<div class="a" style="left:867px;top:-20px;width:128px;height:112px;border-radius:13px;background:#fff"></div>
<svg class="a" style="left:909px;top:0px" width="44" height="45" viewBox="0 0 44 45"><defs><linearGradient id="sg" gradientUnits="userSpaceOnUse" x1="8" y1="42" x2="30" y2="2"><stop offset="0" stop-color="#2d86f7"/><stop offset="1" stop-color="#a3c3ee"/></linearGradient></defs><g fill="none" stroke="url(#sg)" stroke-width="2.3" stroke-linejoin="round"><rect x="18.45" y="2.15" width="6.2" height="8.4"/><path d="M18.45 6 H24.65"/><path d="M11.15 17 V11.95 H31.65 V17"/><path d="M7.15 27.5 V17.15 H36.05 V27.5"/><path d="M21.7 22.4 L3.3 31.3 L6.1 40.85 H36 L39.8 31.3 Z"/><path d="M21.7 22.4 V40.85"/></g></svg>
<div class="t" style="left:890px;top:55.2px;font-size:11px;font-weight:700;color:#26224f;letter-spacing:-0.1px">Booking details</div>
<div class="a" style="left:698px;top:329.5px;width:233px;height:191.5px;border-radius:13px;background:#fff;box-shadow:0 2px 10px rgba(60,80,130,0.12)"></div>
<div class="t" style="left:703px;top:336.4px;font-size:9.6px;color:#222;letter-spacing:-0.4px">Pay Now</div>
<div class="t" style="left:921px;top:334.5px;font-size:7px;color:#bbb">&#215;</div>
<div class="a" style="left:698px;top:353.3px;width:233px;height:0.8px;background:#eeeeee"></div>
<div class="a" style="left:705.2px;top:361.7px;width:55.8px;height:17.4px;border-radius:2px;background:#3d87cf"></div>
<div class="t" style="left:709.6px;top:368.6px;font-size:5.35px;color:#fff;letter-spacing:-0.05px">Pay By Credit Card</div>
<div class="t" style="left:768px;top:368.6px;font-size:5.35px;color:#8a8a8a;letter-spacing:0px">Bank Account</div>
<div class="t" style="left:814.2px;top:368.6px;font-size:5.2px;color:#8a8a8a;letter-spacing:-0.1px">Pay By Cash</div>
<div class="t" style="left:855.3px;top:368.6px;font-size:5.35px;color:#8a8a8a;letter-spacing:0px">Transfer Payment</div>
<div class="t" style="left:709px;top:390.4px;font-size:5.3px;font-weight:700;color:#333;letter-spacing:-0.05px">Cardholder&#8217;s Name</div>
<div class="a" style="left:709px;top:398.6px;width:210.7px;height:14.6px;border:1px solid #dcdcdc"></div>
<div class="t" style="left:709px;top:421.7px;font-size:5.3px;font-weight:700;color:#333;letter-spacing:-0.05px">Credit or debit card</div>
<div class="a" style="left:709px;top:430.6px;width:210.9px;height:14.1px;border:1px solid #dcdcdc"></div>
<svg class="a" style="left:714px;top:434.5px" width="9" height="6" viewBox="0 0 9 6"><rect x="0.5" y="0.5" width="8" height="5" rx="0.8" fill="#8d93b5"/><circle cx="2.2" cy="2" r="1.4" fill="#4a5590"/><rect x="4.5" y="3.3" width="3.5" height="0.8" fill="#fff"/></svg>
<div class="t" style="left:725.8px;top:435.2px;font-size:5.6px;color:#aab0c0">Card number</div>
<div class="t" style="left:873px;top:435.2px;font-size:5.6px;color:#aab0c0">MM / YY&nbsp; CVC</div>
<div class="t" style="left:875.8px;top:463.1px;font-size:5.2px;font-weight:700;color:#333;letter-spacing:-0.1px">Amount(GBP&#8364;)</div>
<div class="a" style="left:876.3px;top:471.9px;width:43.6px;height:13.7px;border:1px solid #dcdcdc"></div>
<div class="t" style="left:897.4px;top:476.7px;font-size:5.6px;color:#444">0.00</div>
<svg class="a" style="left:910.8px;top:474.8px" width="3" height="8" viewBox="0 0 3 8"><path d="M0.2 3 L1.5 0.8 L2.8 3Z M0.2 5 L1.5 7.2 L2.8 5Z" fill="#888"/></svg>
<div class="a" style="left:709px;top:492px;width:25px;height:14.6px;background:#e6e6e6"></div>
<div class="t" style="left:714.5px;top:497px;font-size:5.9px;color:#333">Close</div>
<div class="a" style="left:736.3px;top:492px;width:32.7px;height:14.6px;background:#d91e36"></div>
<div class="t" style="left:741.6px;top:497px;font-size:5.9px;color:#fff;letter-spacing:-0.15px">Pay Now</div>
</body></html>
